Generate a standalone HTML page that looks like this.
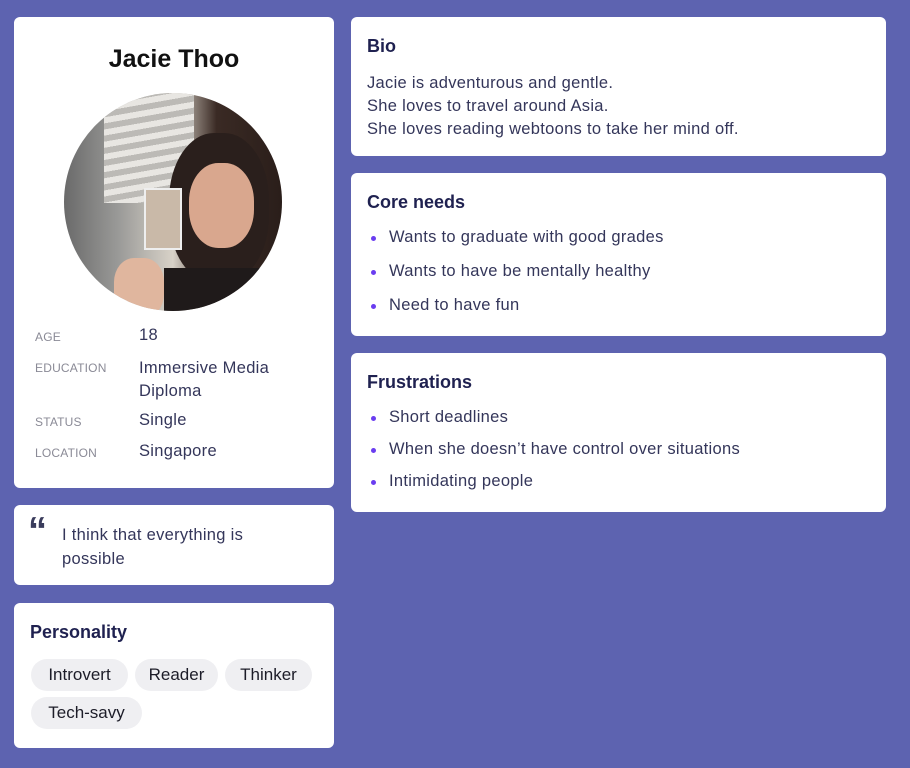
<!DOCTYPE html>
<html><head><meta charset="utf-8"><style>
*{margin:0;padding:0;box-sizing:border-box}
body{width:910px;height:768px;background:#5d63b0;font-family:"Liberation Sans",sans-serif;position:relative;overflow:hidden;color:#2f3152}
.c{position:absolute;background:#fff;border-radius:6px}
h2{font-size:18px;font-weight:bold;color:#1f2150;position:absolute}
.t{position:absolute;font-size:16.5px;color:#34365a;letter-spacing:.3px}
.l{position:absolute;font-size:12px;color:#8a8a96;letter-spacing:.2px}
.b{position:absolute;width:5px;height:5px;border-radius:50%;background:#6a3df0}
.tag{position:absolute;height:32px;line-height:32px;background:#efeff2;border-radius:16px;font-size:17px;color:#1c1c28;text-align:center}
</style></head><body>
<div class="c" style="left:14px;top:17px;width:320px;height:471px">
 <div style="position:absolute;left:0;width:320px;top:28px;text-align:center;font-size:25px;font-weight:bold;color:#111">Jacie Thoo</div>
 <div style="position:absolute;left:50px;top:76px;width:218px;height:218px;border-radius:50%;overflow:hidden;background:linear-gradient(90deg,#6a6a6a 0%,#9a9a98 25%,#d8d2c8 50%,#3a2a24 70%,#2a1e1a 100%)">
  <div style="position:absolute;left:40px;top:0;width:90px;height:110px;background:repeating-linear-gradient(170deg,#e8e6e2 0 6px,#bcbab6 6px 12px)"></div>
  <div style="position:absolute;left:105px;top:40px;width:100px;height:150px;border-radius:45%;background:#2a1f1c"></div>
  <div style="position:absolute;left:125px;top:70px;width:65px;height:85px;border-radius:45%;background:#d9a78e"></div>
  <div style="position:absolute;left:80px;top:95px;width:38px;height:62px;background:#c9b9a8;border:2px solid #eee"></div>
  <div style="position:absolute;left:50px;top:165px;width:50px;height:60px;border-radius:40%;background:#e0b69e"></div>
  <div style="position:absolute;left:100px;top:175px;width:118px;height:60px;background:#1f1a1a"></div>
 </div>
 <div class="l" style="left:21px;top:313px">AGE</div><div class="t" style="left:125px;top:309px">18</div>
 <div class="l" style="left:21px;top:344px">EDUCATION</div><div class="t" style="left:125px;top:340px;line-height:23px">Immersive Media<br>Diploma</div>
 <div class="l" style="left:21px;top:398px">STATUS</div><div class="t" style="left:125px;top:394px">Single</div>
 <div class="l" style="left:21px;top:429px">LOCATION</div><div class="t" style="left:125px;top:425px">Singapore</div>
</div>
<div class="c" style="left:14px;top:505px;width:320px;height:80px">
 <div style="position:absolute;left:14px;top:6px;font-size:38px;font-weight:bold;color:#3a3c5c;font-family:'Liberation Sans',sans-serif;line-height:40px">“</div>
 <div class="t" style="left:48px;top:18px;line-height:24px">I think that everything is<br>possible</div>
</div>
<div class="c" style="left:14px;top:603px;width:320px;height:145px">
 <h2 style="left:16px;top:19px">Personality</h2>
 <div class="tag" style="left:17px;top:56px;width:97px">Introvert</div>
 <div class="tag" style="left:121px;top:56px;width:83px">Reader</div>
 <div class="tag" style="left:211px;top:56px;width:87px">Thinker</div>
 <div class="tag" style="left:17px;top:94px;width:111px">Tech-savy</div>
</div>
<div class="c" style="left:351px;top:17px;width:535px;height:139px">
 <h2 style="left:16px;top:19px">Bio</h2>
 <div class="t" style="left:16px;top:55px;line-height:23px">Jacie is adventurous and gentle.<br>She loves to travel around Asia.<br>She loves reading webtoons to take her mind off.</div>
</div>
<div class="c" style="left:351px;top:173px;width:535px;height:163px">
 <h2 style="left:16px;top:19px">Core needs</h2>
 <div class="b" style="left:20px;top:63px"></div><div class="t" style="left:38px;top:55px">Wants to graduate with good grades</div>
 <div class="b" style="left:20px;top:97px"></div><div class="t" style="left:38px;top:89px">Wants to have be mentally healthy</div>
 <div class="b" style="left:20px;top:131px"></div><div class="t" style="left:38px;top:123px">Need to have fun</div>
</div>
<div class="c" style="left:351px;top:353px;width:535px;height:159px">
 <h2 style="left:16px;top:19px">Frustrations</h2>
 <div class="b" style="left:20px;top:63px"></div><div class="t" style="left:38px;top:55px">Short deadlines</div>
 <div class="b" style="left:20px;top:95px"></div><div class="t" style="left:38px;top:87px">When she doesn’t have control over situations</div>
 <div class="b" style="left:20px;top:127px"></div><div class="t" style="left:38px;top:119px">Intimidating people</div>
</div>
</body></html>
